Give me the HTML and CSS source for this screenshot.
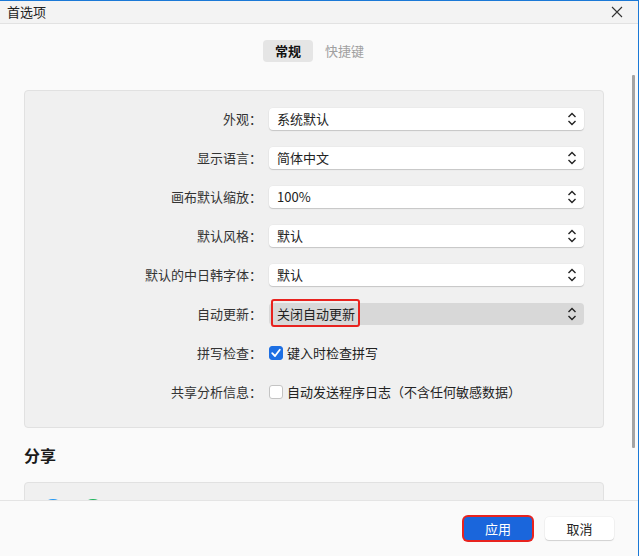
FILE: index.html
```html
<!DOCTYPE html>
<html lang="zh-CN">
<head>
<meta charset="utf-8">
<title>首选项</title>
<link rel="stylesheet" href="styles.css">
</head>
<body>
<div class="window">
  <header class="titlebar">
    <span class="title">首选项</span>
    <button class="close" aria-label="关闭">
      <svg width="12" height="12" viewBox="0 0 12 12"><path d="M1 1 L11 11 M11 1 L1 11" stroke="#333" stroke-width="1.1" fill="none"/></svg>
    </button>
  </header>

  <main class="content">
    <nav class="tabs">
      <span class="tab active">常规</span>
      <span class="tab">快捷键</span>
    </nav>

    <section class="card settings">
      <span class="label">外观：</span>
      <div class="select"><span class="value">系统默认</span><svg class="chev" width="10" height="16" viewBox="0 0 10 16"><path d="M1.5 6 L5 2.5 L8.5 6 M1.5 10 L5 13.5 L8.5 10" stroke="#222" stroke-width="1.4" fill="none"/></svg></div>

      <span class="label">显示语言：</span>
      <div class="select"><span class="value">简体中文</span><svg class="chev" width="10" height="16" viewBox="0 0 10 16"><path d="M1.5 6 L5 2.5 L8.5 6 M1.5 10 L5 13.5 L8.5 10" stroke="#222" stroke-width="1.4" fill="none"/></svg></div>

      <span class="label">画布默认缩放：</span>
      <div class="select"><span class="value">100%</span><svg class="chev" width="10" height="16" viewBox="0 0 10 16"><path d="M1.5 6 L5 2.5 L8.5 6 M1.5 10 L5 13.5 L8.5 10" stroke="#222" stroke-width="1.4" fill="none"/></svg></div>

      <span class="label">默认风格：</span>
      <div class="select"><span class="value">默认</span><svg class="chev" width="10" height="16" viewBox="0 0 10 16"><path d="M1.5 6 L5 2.5 L8.5 6 M1.5 10 L5 13.5 L8.5 10" stroke="#222" stroke-width="1.4" fill="none"/></svg></div>

      <span class="label">默认的中日韩字体：</span>
      <div class="select"><span class="value">默认</span><svg class="chev" width="10" height="16" viewBox="0 0 10 16"><path d="M1.5 6 L5 2.5 L8.5 6 M1.5 10 L5 13.5 L8.5 10" stroke="#222" stroke-width="1.4" fill="none"/></svg></div>

      <span class="label">自动更新：</span>
      <div class="select pressed"><span class="value">关闭自动更新</span><span class="highlight"></span><svg class="chev" width="10" height="16" viewBox="0 0 10 16"><path d="M1.5 6 L5 2.5 L8.5 6 M1.5 10 L5 13.5 L8.5 10" stroke="#222" stroke-width="1.4" fill="none"/></svg></div>

      <span class="label">拼写检查：</span>
      <div class="check-row">
        <span class="checkbox checked"><svg width="14" height="14" viewBox="0 0 14 14"><path d="M3.2 7.2 L6 10 L10.8 3.8" stroke="#fff" stroke-width="1.8" fill="none" stroke-linecap="round" stroke-linejoin="round"/></svg></span>
        <span class="check-text">键入时检查拼写</span>
      </div>

      <span class="label">共享分析信息：</span>
      <div class="check-row">
        <span class="checkbox"></span>
        <span class="check-text">自动发送程序日志（不含任何敏感数据）</span>
      </div>
    </section>

    <h2 class="section-title">分享</h2>

    <section class="card share">
      <span class="dot blue"></span>
      <span class="dot green"></span>
    </section>

    <div class="scroll-thumb"></div>
  </main>

  <footer class="footer">
    <button class="btn primary">应用</button>
    <button class="btn">取消</button>
  </footer>
</div>
</body>
</html>
```

FILE: styles.css
```css
* {
  box-sizing: border-box;
}

html, body {
  margin: 0;
  padding: 0;
  background: #fafafa;
}

body {
  font-family: "Noto Sans CJK SC", "Noto Sans", sans-serif;
  font-size: 13px;
  color: #222;
}

.window {
  width: 639px;
  height: 556px;
  border-top: 1px solid #1a78d6;
  border-right: 1px solid #1a78d6;
  background: #fafafa;
  display: flex;
  flex-direction: column;
  overflow: hidden;
}

/* title bar */
.titlebar {
  height: 23px;
  flex: none;
  background: #f3f3f3;
  border-bottom: 1px solid #e2e2e2;
  display: flex;
  align-items: center;
  justify-content: space-between;
  padding: 0 15px 0 7px;
}

.title {
  font-size: 13px;
  line-height: 20px;
  color: #222;
}

.close {
  border: 0;
  background: none;
  padding: 0;
  width: 12px;
  height: 12px;
  display: flex;
}

/* scrolling content */
.content {
  position: relative;
  flex: 1;
  overflow: hidden;
  padding: 16px 34px 0 24px;
}

/* tab strip is centred on the whole window, not the padded column */
.tabs {
  display: flex;
  justify-content: center;
  height: 22px;
  margin-right: -11px;
}

.tab {
  padding: 0 12px;
  line-height: 22px;
  font-size: 13px;
  color: #a0a0a0;
  border-radius: 4px;
}

.tab.active {
  background: #e5e5e5;
  color: #111;
  font-weight: 600;
}

.card {
  background: #f0f0f0;
  border: 1px solid #e1e1e1;
  border-radius: 4px;
}

.settings {
  margin-top: 28px;
  padding: 17px 19px 24px 0;
  display: grid;
  grid-template-columns: 237px 1fr;
  column-gap: 7px;
  row-gap: 17px;
  align-items: center;
}

.label {
  text-align: right;
  line-height: 22px;
  color: #333;
  white-space: nowrap;
}

.select {
  position: relative;
  height: 22px;
  background: #fff;
  border-radius: 4px;
  box-shadow: 0 1px 1px rgba(0, 0, 0, 0.16), 0 0 0 0.5px rgba(0, 0, 0, 0.04);
  display: flex;
  align-items: center;
  justify-content: space-between;
  padding: 0 7px 0 8px;
}

.select.pressed {
  background: #d8d8d8;
  box-shadow: none;
}

.value {
  line-height: 22px;
  color: #222;
}

.chev {
  display: block;
}

/* red annotation frame around the chosen value */
.highlight {
  position: absolute;
  left: 2px;
  top: -4px;
  width: 89px;
  height: 28px;
  border: 2px solid #e8231f;
  border-radius: 3px;
}

.check-row {
  display: flex;
  align-items: center;
  gap: 4px;
  height: 22px;
}

.checkbox {
  width: 14px;
  height: 14px;
  border-radius: 3px;
  background: #fff;
  border: 1px solid #c4c4c4;
  display: flex;
  flex: none;
}

.checkbox.checked {
  background: #1d6fe3;
  border-color: #1d6fe3;
}

.checkbox.checked svg {
  margin: -1px;
}

.check-text {
  line-height: 22px;
  color: #222;
}

.section-title {
  margin: 16px 0 16px;
  font-size: 16px;
  line-height: 22px;
  font-weight: 700;
  color: #1a1a1a;
}

.share {
  padding: 16px;
  display: flex;
  gap: 16px;
  height: 80px;
}

.dot {
  width: 24px;
  height: 24px;
  border-radius: 50%;
}

.dot.blue {
  background: #2196f3;
}

.dot.green {
  background: #1cb35a;
}

.scroll-thumb {
  position: absolute;
  right: 3px;
  top: 51px;
  width: 3px;
  height: 373px;
  background: #a4a4a4;
  border-radius: 1px;
}

/* footer buttons */
.footer {
  height: 56px;
  flex: none;
  border-top: 1px solid #e4e4e4;
  background: #fafafa;
  display: flex;
  align-items: center;
  justify-content: flex-end;
  gap: 11px;
  padding: 0 24px 0 0;
}

.btn {
  width: 69px;
  height: 23px;
  border: 0;
  border-radius: 4px;
  font-family: inherit;
  font-size: 13px;
  line-height: 23px;
  padding: 0;
  background: #fff;
  color: #222;
  box-shadow: 0 1px 1px rgba(0, 0, 0, 0.14), 0 0 0 0.5px rgba(0, 0, 0, 0.06);
}

.btn.primary {
  width: 68px;
  background: #1a66dc;
  color: #fff;
  box-shadow: 0 0 0 2px #e8231f;
  margin-right: 2px;
}
```
